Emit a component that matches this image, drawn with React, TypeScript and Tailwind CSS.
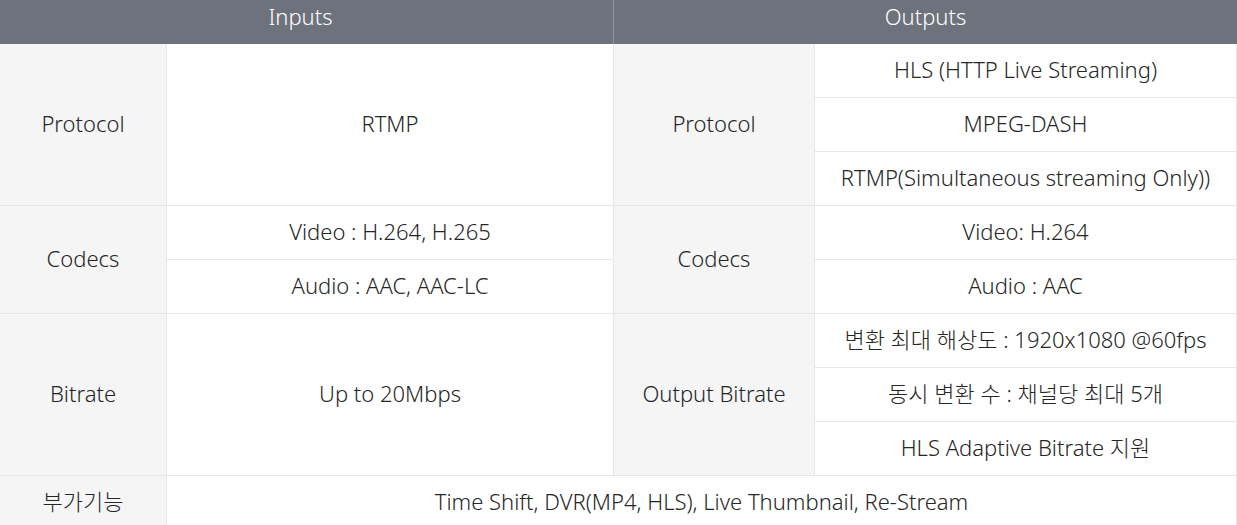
const cell = "flex items-center justify-center border-b border-r border-[#e6e6e6] pb-[3px] text-center";
const label = cell + " bg-[#f5f5f5]";
const value = cell + " bg-white";

export default function App() {
  return (
    <div className="w-[1237px] bg-white font-['Noto_Sans','Noto_Sans_CJK_KR',sans-serif] text-[22px] font-light text-[#262626]">
      <div className="grid grid-cols-[167px_447px_201px_422px] grid-rows-[44px_repeat(9,54px)]">
        <div className="col-span-2 flex items-center justify-center border-r border-[#9096a0] bg-[#6d727c] pb-[11px] pr-[12px] text-white">Inputs</div>
        <div className="col-span-2 flex items-center justify-center bg-[#6d727c] pb-[11px] text-white">Outputs</div>

        <div className={label + " row-span-3"}>Protocol</div>
        <div className={value + " row-span-3"}>RTMP</div>
        <div className={label + " row-span-3"}>Protocol</div>
        <div className={value}>HLS (HTTP Live Streaming)</div>
        <div className={value}>MPEG-DASH</div>
        <div className={value}>RTMP(Simultaneous streaming Only))</div>

        <div className={label + " row-span-2"}>Codecs</div>
        <div className={value}>Video : H.264, H.265</div>
        <div className={label + " row-span-2"}>Codecs</div>
        <div className={value}>Video: H.264</div>
        <div className={value}>Audio : AAC, AAC-LC</div>
        <div className={value}>Audio : AAC</div>

        <div className={label + " row-span-3"}>Bitrate</div>
        <div className={value + " row-span-3"}>Up to 20Mbps</div>
        <div className={label + " row-span-3"}>Output Bitrate</div>
        <div className={value}>변환 최대 해상도 : 1920x1080 @60fps</div>
        <div className={value}>동시 변환 수 : 채널당 최대 5개</div>
        <div className={value}>HLS Adaptive Bitrate 지원</div>

        <div className={label}>부가기능</div>
        <div className={value + " col-span-3"}>Time Shift, DVR(MP4, HLS), Live Thumbnail, Re-Stream</div>
      </div>
    </div>
  );
}
